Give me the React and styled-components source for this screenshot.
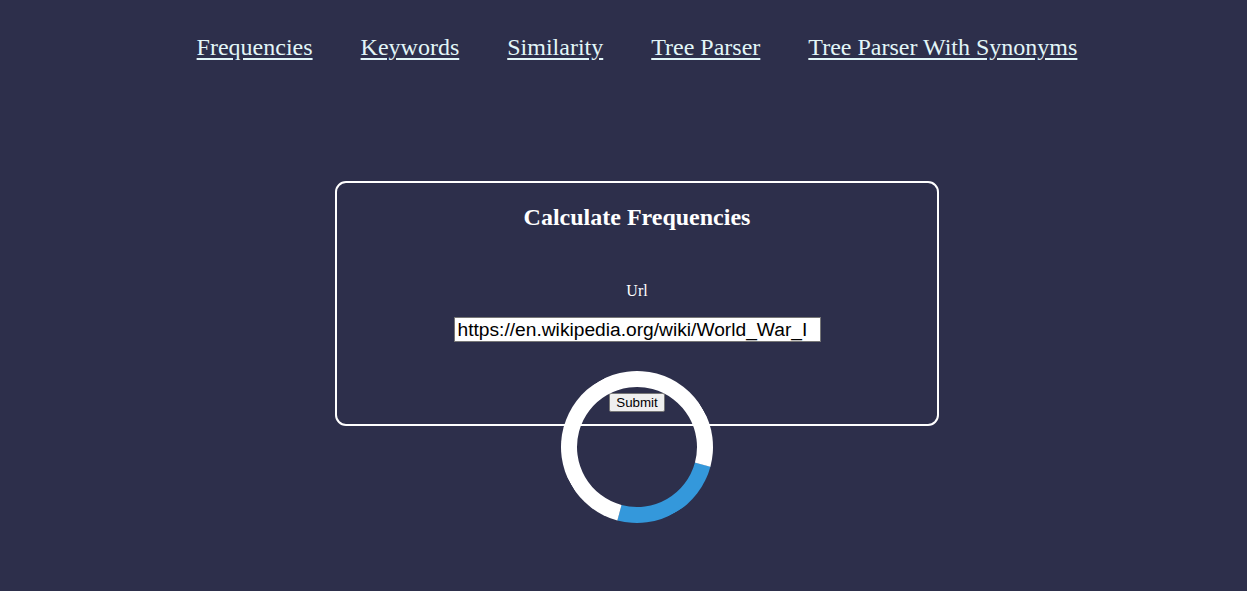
import styled, { createGlobalStyle } from "styled-components";

const Global = createGlobalStyle`
  html, body {
    margin: 0;
    background: #2d2f4b;
    font-family: "Liberation Serif", "Times New Roman", serif;
  }
`;

const Page = styled.div`
  min-height: 591px;
  padding-left: 27px;
  box-sizing: border-box;
`;

const Nav = styled.nav`
  display: flex;
  justify-content: center;
  gap: 48px;
  padding-top: 34px;
`;

const NavLink = styled.a`
  color: #e2f6f8;
  font-size: 24px;
  line-height: 27px;
  text-decoration: underline;
  text-underline-offset: 3px;
  cursor: pointer;
`;

const Stage = styled.div`
  position: relative;
  width: 604px;
  margin: 120px auto 0;
`;

const Card = styled.form`
  display: flex;
  flex-direction: column;
  align-items: center;
  box-sizing: border-box;
  width: 604px;
  border: 2px solid #fff;
  border-radius: 11px;
  padding: 20px 0 12px;
`;

const Title = styled.h2`
  margin: 0;
  color: #fff;
  font-size: 24px;
  line-height: 28px;
  font-weight: bold;
`;

const Label = styled.label`
  margin-top: 51px;
  color: #fff;
  font-size: 16px;
  line-height: 18px;
`;

const Input = styled.input`
  margin-top: 17px;
  box-sizing: border-box;
  width: 367px;
  height: 25px;
  padding: 0 3px;
  border: 1px solid #767676;
  background: #fff;
  color: #000;
  font-family: "Liberation Sans", Arial, sans-serif;
  font-size: 19.2px;
`;

const Button = styled.button`
  margin-top: 51px;
  height: 19px;
  padding: 0 6px;
  border: 1px solid #767676;
  border-radius: 2px;
  background: #efefef;
  color: #000;
  font-family: "Liberation Sans", Arial, sans-serif;
  font-size: 13.33px;
  line-height: 15px;
`;

const Spinner = styled.div`
  position: absolute;
  top: 190px;
  left: 50%;
  margin-left: -76px;
  width: 120px;
  height: 120px;
  border: 16px solid #fff;
  border-top-color: #3498db;
  border-radius: 50%;
  transform: rotate(150deg);
  pointer-events: none;
`;

const links = [
  "Frequencies",
  "Keywords",
  "Similarity",
  "Tree Parser",
  "Tree Parser With Synonyms",
];

export default function App() {
  return (
    <Page>
      <Global />
      <Nav>
        {links.map((l) => (
          <NavLink key={l}>{l}</NavLink>
        ))}
      </Nav>
      <Stage>
        <Card onSubmit={(e) => e.preventDefault()}>
          <Title>Calculate Frequencies</Title>
          <Label htmlFor="url">Url</Label>
          <Input
            id="url"
            defaultValue="https://en.wikipedia.org/wiki/World_War_I"
          />
          <Button type="submit">Submit</Button>
        </Card>
        <Spinner />
      </Stage>
    </Page>
  );
}
